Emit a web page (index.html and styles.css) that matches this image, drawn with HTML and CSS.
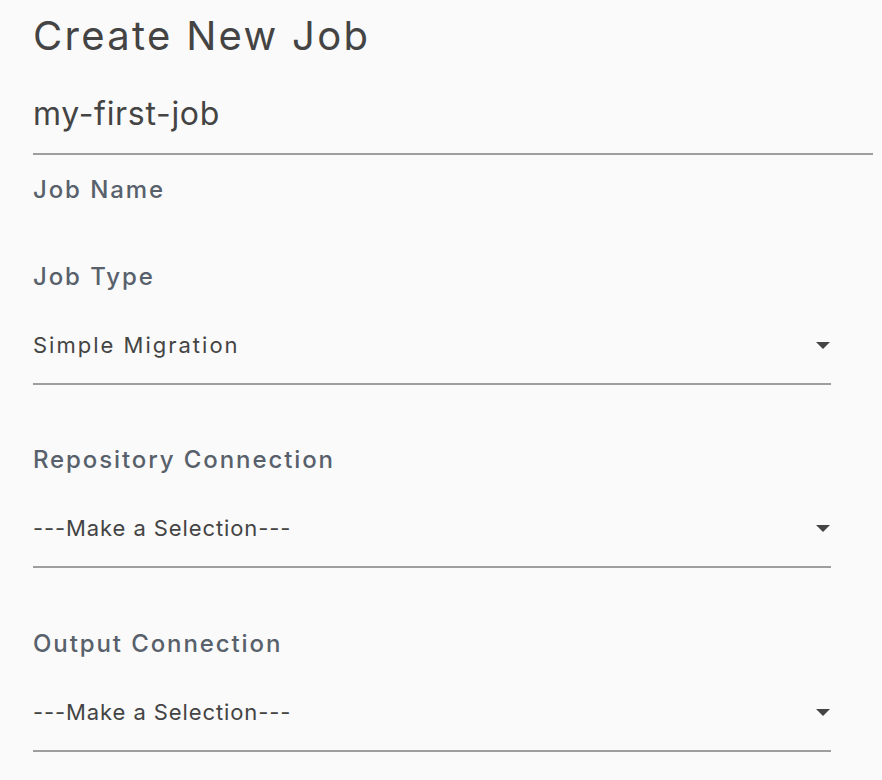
FILE: index.html
```html
<!DOCTYPE html>
<html lang="en">
<head>
<meta charset="utf-8">
<title>Create New Job</title>
<link rel="stylesheet" href="styles.css">
</head>
<body>
<main class="page">
  <h1 class="title">Create New Job</h1>

  <div class="text-field">
    <div class="text-input">my-first-job</div>
    <label class="field-label field-label--below">Job Name</label>
  </div>

  <div class="select-field">
    <label class="field-label">Job Type</label>
    <div class="select">
      <span class="select-value">Simple Migration</span>
      <svg class="select-arrow" width="14" height="7" viewBox="0 0 14 7" aria-hidden="true"><path d="M0 0H14L7 7Z"/></svg>
    </div>
  </div>

  <div class="select-field">
    <label class="field-label">Repository Connection</label>
    <div class="select">
      <span class="select-value select-value--placeholder">---Make a Selection---</span>
      <svg class="select-arrow" width="14" height="7" viewBox="0 0 14 7" aria-hidden="true"><path d="M0 0H14L7 7Z"/></svg>
    </div>
  </div>

  <div class="select-field">
    <label class="field-label">Output Connection</label>
    <div class="select">
      <span class="select-value select-value--placeholder">---Make a Selection---</span>
      <svg class="select-arrow" width="14" height="7" viewBox="0 0 14 7" aria-hidden="true"><path d="M0 0H14L7 7Z"/></svg>
    </div>
  </div>
</main>
</body>
</html>
```

FILE: styles.css
```css
html, body {
  margin: 0;
  padding: 0;
  background: #fafafa;
}

body {
  font-family: Inter, "Open Sans", sans-serif;
  color: #444444;
}

.page {
  padding: 12px 9px 0 33px;
  display: flex;
  flex-direction: column;
}

.title {
  margin: 0;
  font-size: 40px;
  line-height: 48px;
  font-weight: 400;
  letter-spacing: 2.3px;
  color: #444444;
}

.text-field {
  margin-top: 34px;
  display: flex;
  flex-direction: column;
}

.text-input {
  font-size: 32px;
  line-height: 40px;
  letter-spacing: 0.7px;
  padding-bottom: 19px;
  border-bottom: 2px solid #9e9e9e;
  color: #444444;
}

.field-label {
  font-size: 24px;
  line-height: 28px;
  font-weight: 500;
  letter-spacing: 1.9px;
  color: #58616b;
}

.field-label--below {
  margin-top: 21px;
}

.select-field {
  margin-top: 59px;
  width: 95%;
  display: flex;
  flex-direction: column;
}

.select-field + .select-field {
  margin-top: 61px;
}

.select-field:last-child {
  margin-top: 62px;
}

.select {
  margin-top: 40px;
  display: flex;
  align-items: center;
  justify-content: space-between;
  padding-bottom: 24px;
  border-bottom: 2px solid #9e9e9e;
}

.select-value {
  font-size: 22px;
  line-height: 28px;
  letter-spacing: 2px;
  color: #444444;
}

.select-value--placeholder {
  letter-spacing: 0.9px;
}

.select-arrow {
  fill: #444444;
  margin-right: 1px;
}
```
